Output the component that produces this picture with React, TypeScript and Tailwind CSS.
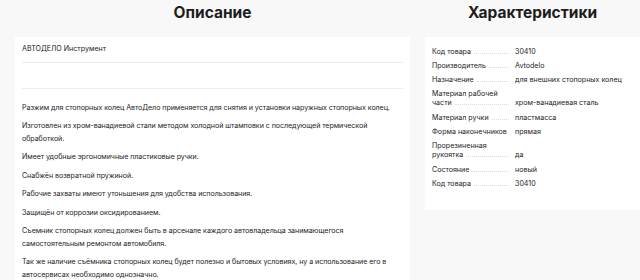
const paragraphs = [
  "Разжим для стопорных колец АвтоДело применяется для снятия и установки наружных стопорных колец.",
  "Изготовлен из хром-ванадиевой стали методом холодной штамповки с последующей термической обработкой.",
  "Имеет удобные эргономичные пластиковые ручки.",
  "Снабжён возвратной пружиной.",
  "Рабочие захваты имеют утоньшения для удобства использования.",
  "Защищён от коррозии оксидированием.",
  "Съемник стопорных колец должен быть в арсенале каждого автовладельца занимающегося самостоятельным ремонтом автомобиля.",
  "Так же наличие съёмника стопорных колец будет полезно и бытовых условиях, ну а использование его в автосервисах необходимо однозначно.",
]

const specs: { label: string[]; value: string }[] = [
  { label: ["Код товара"], value: "30410" },
  { label: ["Производитель"], value: "Avtodelo" },
  { label: ["Назначение"], value: "для внешних стопорных колец" },
  { label: ["Материал рабочей", "части"], value: "хром-ванадиевая сталь" },
  { label: ["Материал ручки"], value: "пластмасса" },
  { label: ["Форма наконечников"], value: "прямая" },
  { label: ["Прорезиненная", "рукоятка"], value: "да" },
  { label: ["Состояние"], value: "новый" },
  { label: ["Код товара"], value: "30410" },
]

function SpecRow({ label, value }: { label: string[]; value: string }) {
  const first = label.slice(0, -1)
  const last = label[label.length - 1]
  return (
    <div className="flex items-end text-[7.1px] leading-[9px] text-[#1d1d1d]">
      <div className="w-[80px] shrink-0">
        {first.map((l) => (
          <div key={l}>{l}</div>
        ))}
        <div className="flex items-end">
          <span className="whitespace-nowrap">{last}</span>
          <span className="flex-1 mx-[3px] mb-[2px] border-b border-dotted border-[#dadada]" />
        </div>
      </div>
      <div className="pl-[3px] whitespace-nowrap">{value}</div>
    </div>
  )
}

export default function App() {
  return (
    <div className="w-[640px] h-[280px] overflow-hidden bg-[#f8f8f8] font-['Inter',sans-serif] text-[#1d1d1d]">
      <div className="flex gap-[15px] pl-[15px]">
        {/* Описание */}
        <div className="w-[395px] shrink-0">
          <h2 className="h-[37px] pb-[12px] flex items-center justify-center text-[15.5px] font-bold">
            Описание
          </h2>
          <div className="bg-white px-[7px] pb-6 h-[300px]">
            <div className="h-[26px] flex items-center text-[7.1px] border-b border-[#ededed]">
              АВТОДЕЛО Инструмент
            </div>
            <div className="h-[26px] border-b border-[#ededed]" />
            <div className="pt-[13px] text-[7.1px] leading-[12.6px] tracking-[-0.06px]">
              {paragraphs.map((p) => (
                <p key={p} className="mb-[5.8px]">
                  {p}
                </p>
              ))}
            </div>
          </div>
        </div>

        {/* Характеристики */}
        <div className="w-[215px] shrink-0">
          <h2 className="h-[37px] pb-[12px] flex items-center justify-center text-[15.5px] font-bold">
            Характеристики
          </h2>
          <div className="bg-white pl-[7px] pt-[9.5px] pb-[22px] flex flex-col gap-[5.3px]">
            {specs.map((s, i) => (
              <SpecRow key={i} label={s.label} value={s.value} />
            ))}
          </div>
        </div>
      </div>
    </div>
  )
}
